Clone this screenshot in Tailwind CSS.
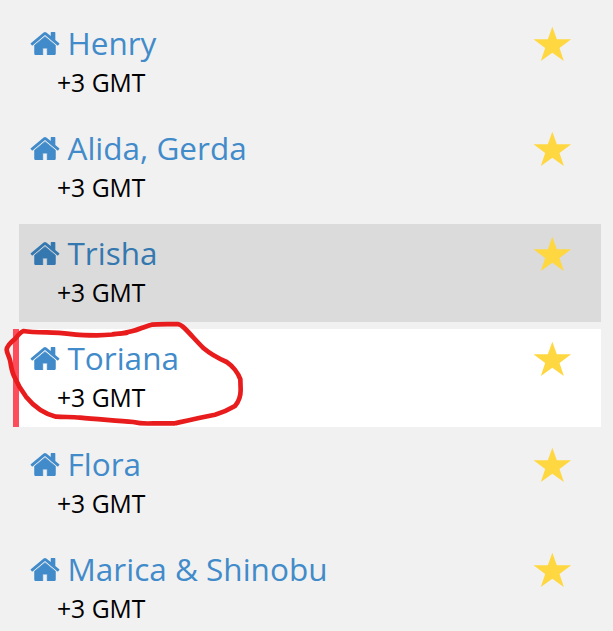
<!DOCTYPE html>
<html lang="en">
<head>
  <meta charset="UTF-8">
  <meta name="viewport" content="width=device-width, initial-scale=1.0">
  <title>Contacts</title>
  <script src="https://cdn.jsdelivr.net/npm/@tailwindcss/browser@4"></script>
</head>
<body class="bg-[#f1f1f1] h-screen overflow-hidden relative font-['Open_Sans',sans-serif]">
  <!-- Contact list -->
  <ul id="contacts" class="flex flex-col gap-[7.22px] pt-[13.75px] pl-[13px] pr-3"></ul>

  <!-- Hand-drawn marker -->
  <svg class="absolute left-0 top-[310px] w-[260px] h-[130px]" viewBox="0 0 780 390" fill="none" stroke="#e81c1c" stroke-width="14" stroke-linecap="round" stroke-linejoin="round">
    <path d="M380 69C350 73 320 75 290 76C265 76 245 76 228 74C195 70 165 67 140 67C115 67 90 67 70 63C60 68 52 78 46 86C32 97 21 107 20 119C21 130 28 140 31 155C33 170 36 185 42 198C52 221 65 243 78 260C100 287 128 310 168 320C195 322 215 320 240 323C290 328 350 331 400 336C420 341 440 341 460 340L524 340C560 332 600 323 645 314C670 307 690 297 705 288C716 275 722 258 722 240L721 208C715 190 698 168 680 156C655 145 630 131 610 114C590 94 572 73 553 54C547 48 541 43 533 42C510 43 475 42 455 44C435 49 415 59 395 64C380 68 360 72 340 72"/>
  </svg>

  <script>
    const contacts = [
      { name: "Henry" },
      { name: "Alida, Gerda" },
      { name: "Trisha", state: "hover" },
      { name: "Toriana", state: "active" },
      { name: "Flora" },
      { name: "Marica & Shinobu" }
    ];

    const rowStyles = {
      hover: "bg-[#dbdbdb] bg-clip-padding border-transparent",
      active: "bg-white border-[#ff4c5b]",
      none: "border-transparent"
    };

    const list = document.getElementById("contacts");
    contacts.forEach(contact => {
      const li = document.createElement("li");
      li.className = `flex shrink-0 justify-between h-[98px] border-l-6 pl-[11px] pr-[30px] ${rowStyles[contact.state || "none"]}`;
      const color = contact.state === "hover" ? "text-[#3578b0]" : "text-[#428bca]";
      li.innerHTML = `
        <div>
          <div class="flex items-start ${color}">
            <svg class="mt-[18px] w-[30px] h-[23px]" viewBox="61 253 1670 1283" fill="currentColor">
              <path stroke="currentColor" stroke-width="44" d="M1472 992v480q0 26-19 45t-45 19h-384v-384h-256v384h-384q-26 0-45-19t-19-45v-480q0-1 .5-3t.5-3l575-474 575 474q1 2 1 6z"/>
              <path d="M1695 923l-62 74q-8 9-21 11h-3q-13 0-21-7l-692-577-692 577q-12 8-24 7-13-2-21-11l-62-74q-8-10-7-23.5t11-21.5l719-599q32-26 76-26t76 26l244 204v-195q0-14 9-23t23-9h192q14 0 23 9t9 23v408l219 182q10 8 11 21.5t-7 23.5z"/>
            </svg>
            <span class="ml-[7.5px] mt-[7px] mb-px text-[31.5px] leading-11">${contact.name.replace("&", "&amp;")}</span>
          </div>
          <p class="pl-[27px] text-[24.7px] leading-[34px] text-black">+3 GMT</p>
        </div>
        <svg class="mt-[13px] w-[38px] h-[35px] overflow-visible" viewBox="-1.5 1 114 105" fill="#ffd740">
          <path d="M56.5 0L70 38H113L78 64L91 103L56.5 78L22 103L35 64L0 38H43Z"/>
        </svg>
      `;
      list.appendChild(li);
    });
  </script>
</body>
</html>
